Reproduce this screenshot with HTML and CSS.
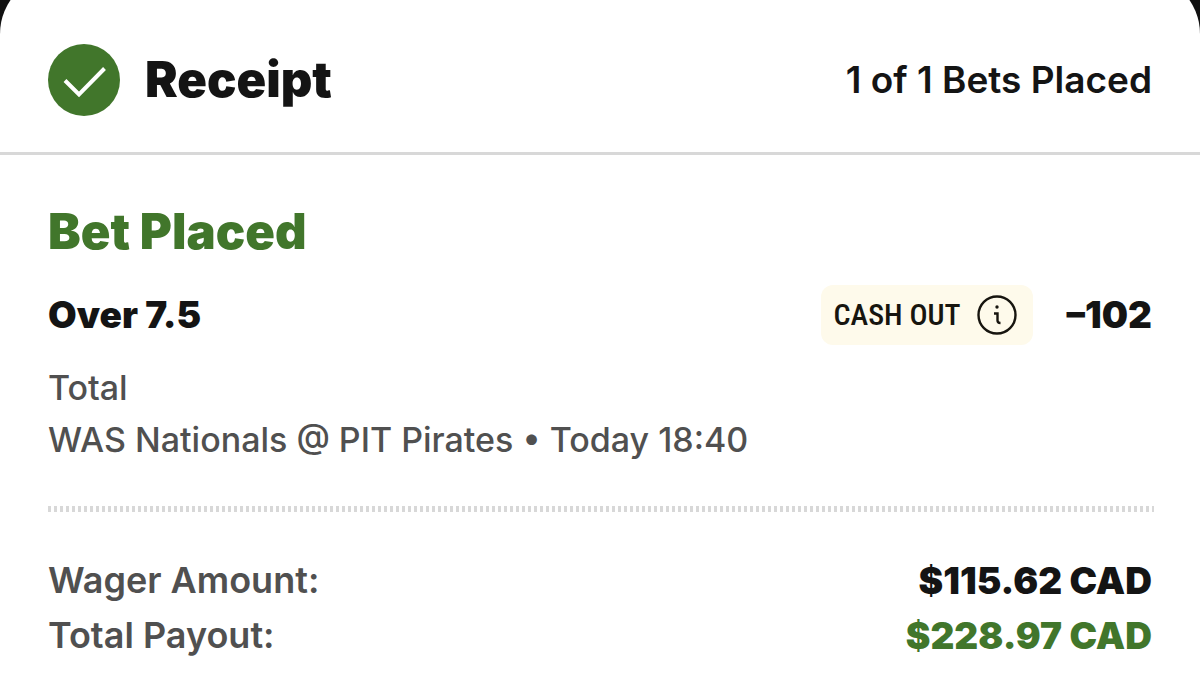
FILE: index.html
```html
<!DOCTYPE html>
<html lang="en">
<head>
<meta charset="utf-8">
<title>Receipt</title>
<link rel="stylesheet" href="styles.css">
</head>
<body>
<main class="sheet">
  <header class="header">
    <svg class="check" viewBox="0 0 72 72" aria-hidden="true"><circle cx="36" cy="36" r="36" fill="#41762b"/><path d="M17 36.500l14 14L56.500 24.500" fill="none" stroke="#fff" stroke-width="4"/></svg>
    <h1 class="title">Receipt</h1>
    <p class="count">1 of 1 Bets Placed</p>
  </header>
  <section class="bet">
    <h2 class="status">Bet Placed</h2>
    <div class="selection">
      <h3 class="pick">Over 7.5</h3>
      <button class="cashout" type="button">
        <span class="cashout-label">CASH OUT</span>
        <svg class="info" viewBox="0 0 40 40" aria-hidden="true"><circle cx="20" cy="20" r="18.500" fill="none" stroke="#17150f" stroke-width="2.400"/><circle cx="20" cy="12" r="1.700" fill="#17150f"/><path d="M17 18.500h3.500v7q0 2.500 3 2.500" fill="none" stroke="#17150f" stroke-width="2.400"/></svg>
      </button>
      <span class="odds">–102</span>
    </div>
    <p class="market">Total</p>
    <p class="event">WAS Nationals @ PIT Pirates • Today 18:40</p>
  </section>
  <dl class="amounts">
    <div class="amount"><dt>Wager Amount:</dt><dd>$115.62 CAD</dd></div>
    <div class="amount payout"><dt>Total Payout:</dt><dd>$228.97 CAD</dd></div>
  </dl>
</main>
</body>
</html>
```
FILE: styles.css
```css
* { box-sizing: border-box; margin: 0; padding: 0; }
body { background: #111; font-family: Inter, "Liberation Sans", sans-serif; color: #141414; }
.sheet { min-height: calc(100vh + 26px); margin-top: -26px; background: #fff; border-radius: 60px 60px 0 0; }
.header { display: flex; align-items: center; padding: 70px 48px 36px; border-bottom: 3px solid #d8d8d8; }
.check { width: 72px; height: 72px; margin-right: 25px; }
.title { font-size: 49px; line-height: 72px; font-weight: 900; }
.count { margin-left: auto; font-size: 37px; line-height: 72px; font-weight: 600; }
.bet { padding: 47px 48px 40px; }
.status { font-size: 49px; line-height: 60px; font-weight: 900; color: #41762b; }
.selection { display: flex; align-items: center; margin-top: 23px; }
.pick, .odds { font-size: 37px; line-height: 60px; font-weight: 900; }
.cashout { display: flex; align-items: center; gap: 16px; height: 60px; margin: 0 34px 0 auto; padding: 0 16px 0 12px; border: 0; border-radius: 12px; background: #fefaeb; color: #17150f; }
.cashout-label { font: 500 30px/60px "Roboto Condensed", "Liberation Sans Narrow", "Liberation Sans", sans-serif; }
.info { width: 40px; height: 40px; }
.market, .event { font-size: 34px; line-height: 52px; font-weight: 500; color: #505050; }
.market { margin-top: 17px; }
.amounts { margin: 0 46px 0 48px; padding: 47px 2px 16px 0; background: repeating-linear-gradient(90deg, #d8d8d8 0 3px, #fff 3px 6px) 0 0 / 100% 6px no-repeat; }
.amount { display: flex; justify-content: space-between; font-size: 37px; line-height: 55px; }
.amount dt { font-size: 36px; font-weight: 600; color: #505050; }
.amount dd { font-weight: 900; }
.payout dd { color: #41762b; }
```
